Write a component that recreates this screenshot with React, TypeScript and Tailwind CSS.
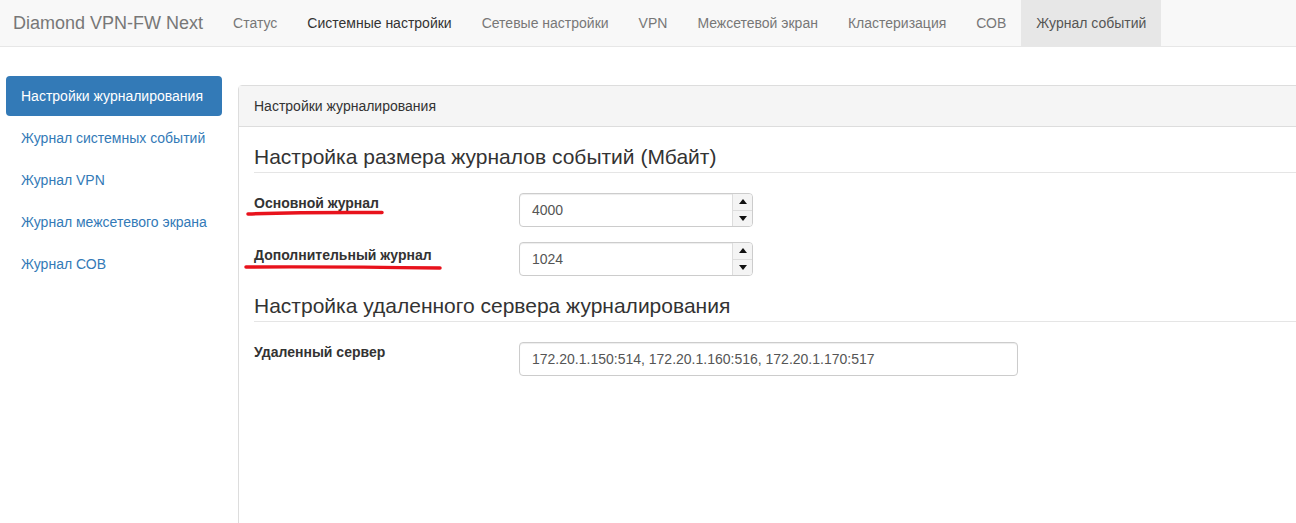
import React from "react";

const navItems = [
  { label: "Статус" },
  { label: "Системные настройки", hover: true },
  { label: "Сетевые настройки" },
  { label: "VPN" },
  { label: "Межсетевой экран" },
  { label: "Кластеризация" },
  { label: "СОВ" },
  { label: "Журнал событий", active: true },
];

const sideItems = [
  "Настройки журналирования",
  "Журнал системных событий",
  "Журнал VPN",
  "Журнал межсетевого экрана",
  "Журнал СОВ",
];

function Spinner() {
  return (
    <div className="flex w-[20px] flex-col border-l border-[#ddd] bg-[#f4f4f4]">
      <div className="flex flex-1 items-center justify-center border-b border-[#ddd]">
        <svg width="8" height="5" viewBox="0 0 8 5">
          <path d="M0 5 L4 0 L8 5 Z" fill="#111" />
        </svg>
      </div>
      <div className="flex flex-1 items-center justify-center">
        <svg width="8" height="5" viewBox="0 0 8 5">
          <path d="M0 0 L4 5 L8 0 Z" fill="#111" />
        </svg>
      </div>
    </div>
  );
}

function NumberField({ value }: { value: string }) {
  return (
    <div className="flex h-[34px] w-[234px] overflow-hidden rounded-[4px] border border-[#ccc] bg-white shadow-[inset_0_1px_1px_rgba(0,0,0,0.075)]">
      <div className="flex flex-1 items-center px-[12px] text-[14px] text-[#555]">{value}</div>
      <Spinner />
    </div>
  );
}

export default function App() {
  return (
    <div className="h-[523px] w-[1296px] overflow-hidden bg-white font-['Liberation_Sans',Arial,sans-serif] text-[14px] text-[#333]">
      {/* Navbar */}
      <nav className="flex h-[47px] items-stretch border-b border-[#e7e7e7] bg-[#f8f8f8]">
        <div className="flex items-center pl-[13px] pr-[15px] text-[18px] text-[#777]">Diamond VPN-FW Next</div>
        {navItems.map((item) => (
          <div
            key={item.label}
            className={`flex items-center px-[15px] ${
              item.active ? "bg-[#e7e7e7] text-[#555]" : item.hover ? "text-[#333]" : "text-[#777]"
            }`}
          >
            {item.label}
          </div>
        ))}
      </nav>

      <div className="flex gap-[16px] pl-[6px]">
        {/* Sidebar */}
        <div className="mt-[29px] flex w-[216px] shrink-0 flex-col gap-[2px]">
          {sideItems.map((s, i) => (
            <div
              key={s}
              className={`h-[40px] rounded-[4px] px-[15px] leading-[40px] ${
                i === 0 ? "bg-[#337ab7] text-white" : "text-[#337ab7]"
              }`}
            >
              {s}
            </div>
          ))}
        </div>

        {/* Panel */}
        <div className="mt-[38px] h-[480px] w-[1100px] shrink-0 rounded-[4px] border border-[#ddd]">
          <div className="h-[41px] border-b border-[#ddd] bg-[#f5f5f5] px-[15px] leading-[40px] text-[#333]">
            Настройки журналирования
          </div>
          <div className="p-[15px]">
            <div className="mb-[20px] border-b border-[#e5e5e5] text-[21px] leading-[30px] text-[#333]">
              Настройка размера журналов событий (Мбайт)
            </div>

            <div className="mb-[15px] flex">
              <div className="relative w-[265px] font-bold leading-[20px]">
                Основной журнал
                <svg className="absolute left-[-8px] top-[16px]" width="140" height="8" viewBox="0 0 140 8">
                  <path d="M2 5 Q 60 3 136 3.5" stroke="#e8121c" strokeWidth="3.5" strokeLinecap="round" fill="none" />
                </svg>
              </div>
              <NumberField value="4000" />
            </div>

            <div className="mb-[15px] flex">
              <div className="relative w-[265px] pt-[3px] font-bold leading-[20px]">
                Дополнительный журнал
                <svg className="absolute left-[-10px] top-[21px]" width="200" height="8" viewBox="0 0 200 8">
                  <path d="M2 4 Q 90 3.5 196 5" stroke="#e8121c" strokeWidth="3.5" strokeLinecap="round" fill="none" />
                </svg>
              </div>
              <NumberField value="1024" />
            </div>

            <div className="mb-[20px] border-b border-[#e5e5e5] text-[21px] leading-[30px] text-[#333]">
              Настройка удаленного сервера журналирования
            </div>

            <div className="flex">
              <div className="w-[265px] font-bold leading-[20px]">Удаленный сервер</div>
              <div className="flex h-[34px] w-[499px] items-center rounded-[4px] border border-[#ccc] px-[12px] text-[#555] shadow-[inset_0_1px_1px_rgba(0,0,0,0.075)]">
                172.20.1.150:514, 172.20.1.160:516, 172.20.1.170:517
              </div>
            </div>
          </div>
        </div>
      </div>
    </div>
  );
}
